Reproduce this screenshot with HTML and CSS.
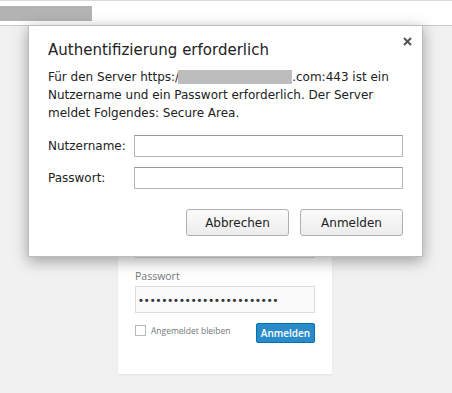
FILE: index.html
```html
<!DOCTYPE html>
<html lang="de">
  <head>
    <meta charset="UTF-8" />
    <meta name="viewport" content="width=device-width, initial-scale=1.0" />
    <title>Anmelden</title>
    <link rel="stylesheet" href="styles.css">
  </head>
  <body>
    <div class="toolbar">
      <div class="url-redacted"></div>
    </div>

    <div class="page">
      <form class="login-card">
        <div class="form-group">
          <label for="user">Benutzername oder E-Mail-Adresse</label>
          <input type="text" id="user" class="login-input" />
        </div>
        <div class="form-group">
          <label for="pass">Passwort</label>
          <input type="password" id="pass" class="login-input" value="ffffffffffffffffffffffff" />
        </div>
        <div class="login-row">
          <label class="remember"><span class="checkbox"></span>Angemeldet bleiben</label>
          <button type="button" class="login-button">Anmelden</button>
        </div>
      </form>
    </div>

    <div class="dialog">
      <svg class="close" width="9" height="9" viewBox="0 0 9 9">
        <path d="M1 1 L8 8 M8 1 L1 8" stroke="#555" stroke-width="2" />
      </svg>
      <h2>Authentifizierung erforderlich</h2>
      <p class="message">
        Für den Server https:/<span class="host-redacted"></span>.com:443 ist ein
        Nutzername und ein Passwort erforderlich. Der Server meldet Folgendes:
        Secure Area.
      </p>
      <div class="field">
        <label for="dlgUser">Nutzername:</label>
        <input type="text" id="dlgUser" />
      </div>
      <div class="field">
        <label for="dlgPass">Passwort:</label>
        <input type="password" id="dlgPass" />
      </div>
      <div class="actions">
        <button type="button">Abbrechen</button>
        <button type="button">Anmelden</button>
      </div>
    </div>
  </body>
</html>
```

FILE: styles.css
```css
* {
  margin: 0;
  padding: 0;
  box-sizing: border-box;
}
body {
  font-family: "DejaVu Sans", "Liberation Sans", sans-serif;
  background: #f1f1f1;
  width: 452px;
  height: 393px;
  overflow: hidden;
  position: relative;
}
.toolbar {
  height: 26px;
  background: #fff;
  border-top: 1px solid #dcdcdc;
  border-bottom: 1px solid #c9c9c9;
  padding-top: 5px;
}
.url-redacted {
  width: 92px;
  height: 15px;
  background: #b3b3b3;
}

/* login page behind the dialog */
.page {
  display: flex;
  justify-content: center;
  padding-top: 189px;
}
.login-card {
  width: 214px;
  margin-right: 2px;
  background: #fff;
  padding: 0 17px 31px;
  font-family: "Open Sans", "Liberation Sans", sans-serif;
  box-shadow: 0 1px 2px rgba(0, 0, 0, 0.06);
}
.form-group {
  margin-bottom: 12px;
}
.form-group + .form-group {
  margin-bottom: 10px;
}
.form-group label {
  display: block;
  font-size: 10.5px;
  line-height: 13px;
  color: #72777c;
  margin-bottom: 3px;
}
.login-input {
  display: block;
  width: 100%;
  height: 27px;
  border: 1px solid #ddd;
  background: #fbfbfb;
  font-size: 11px;
  font-weight: bold;
  padding: 0 3px;
  letter-spacing: 2px;
  color: #32373c;
}
.login-row {
  display: flex;
  justify-content: space-between;
  align-items: flex-start;
}
.remember {
  display: flex;
  align-items: center;
  gap: 5px;
  font-size: 8.5px;
  color: #72777c;
  padding-top: 2px;
}
.checkbox {
  width: 11px;
  height: 11px;
  border: 1px solid #b4b9be;
  background: #fff;
}
.login-button {
  width: 59px;
  height: 20px;
  border: 1px solid #0073aa;
  border-radius: 2px;
  background: #2a8bcb;
  color: #fff;
  font-family: "Open Sans", "Liberation Sans", sans-serif;
  font-size: 10px;
  font-weight: 600;
}

/* browser auth dialog */
.dialog {
  position: absolute;
  left: 28px;
  top: 25px;
  width: 395px;
  height: 232px;
  background: #fff;
  border: 1px solid #bdbdbd;
  padding: 15px 19px 0;
  box-shadow: 0 4px 14px rgba(0, 0, 0, 0.35);
  color: #222;
}
.close {
  position: absolute;
  right: 10px;
  top: 11px;
}
.dialog h2 {
  font-size: 15px;
  font-weight: normal;
  color: #222;
  margin-bottom: 9px;
}
.message {
  font-size: 12px;
  line-height: 18px;
  margin-bottom: 13px;
}
.host-redacted {
  display: inline-block;
  width: 114px;
  height: 14px;
  background: #bdbdbd;
  margin-left: -1px;
  vertical-align: -3px;
}
.field {
  display: flex;
  align-items: center;
  height: 22px;
  margin-bottom: 10px;
}
.field label {
  width: 86px;
  font-size: 12px;
}
.field input {
  flex: 1;
  height: 22px;
  border: 1px solid #b6b6b6;
  border-top-color: #999;
  background: #fff;
}
.actions {
  display: flex;
  justify-content: flex-end;
  gap: 11px;
  margin-top: 20px;
}
.actions button {
  width: 103px;
  height: 27px;
  border: 1px solid #b0b0b0;
  border-radius: 3px;
  background: linear-gradient(#fbfbfb, #ececec);
  font-family: "DejaVu Sans", "Liberation Sans", sans-serif;
  font-size: 12px;
  color: #222;
}
```
